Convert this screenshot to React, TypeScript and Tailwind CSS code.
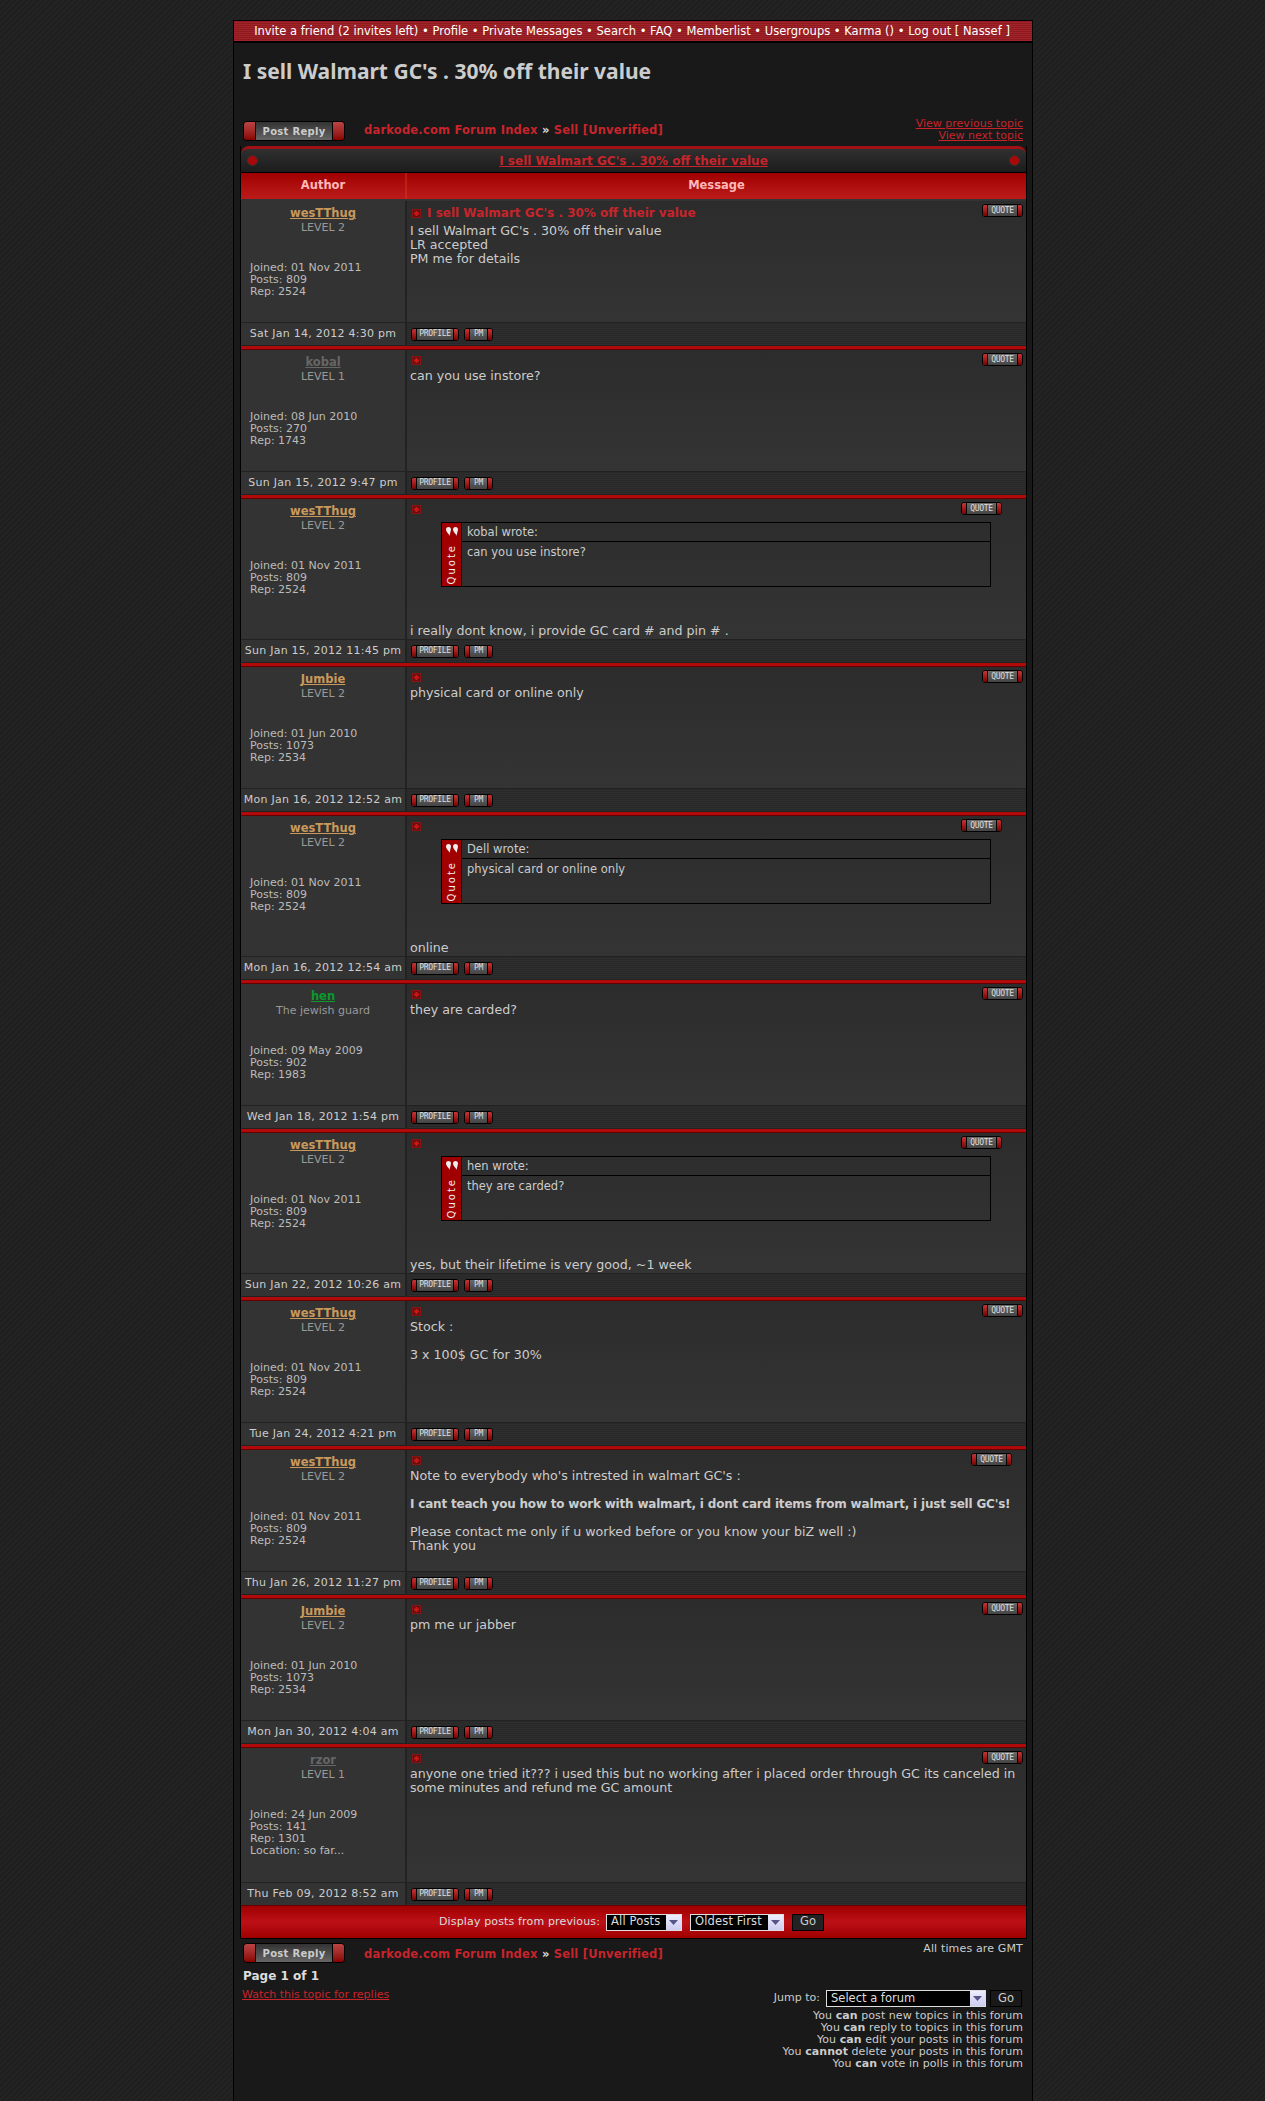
import React from "react";

const SANS = "font-['DejaVu_Sans','Liberation_Sans',sans-serif]";

function SmallBtn({ label, w }: { label: string; w: string }) {
  return (
    <span className={`flex h-[13px] ${w} rounded-[3px] border border-black bg-[#555] overflow-hidden`}>
      <span className="w-[4px] bg-gradient-to-b from-[#c33] to-[#700]" />
      <span className="flex-1 flex items-center justify-center bg-gradient-to-b from-[#6a6a6a] to-[#444] border-x border-black text-[8px] tracking-[-0.3px] leading-none text-[#ddd] font-['DejaVu_Sans_Mono',monospace]">
        {label}
      </span>
      <span className="w-[4px] bg-gradient-to-b from-[#c33] to-[#700]" />
    </span>
  );
}

function PostReply() {
  return (
    <span className="flex h-[20px] w-[102px] rounded-[4px] border border-black overflow-hidden">
      <span className="w-[11px] bg-gradient-to-b from-[#b44] to-[#800]" />
      <span className="flex-1 flex items-center justify-center bg-gradient-to-b from-[#333] to-[#666] border-x border-black text-[10px] font-bold tracking-[0.3px] text-[#ccc]">
        Post Reply
      </span>
      <span className="w-[11px] bg-gradient-to-b from-[#b44] to-[#800]" />
    </span>
  );
}

function Breadcrumb() {
  return (
    <span className="text-[11.5px] font-bold tracking-[0.2px] text-[#c8242b]">
      darkode.com Forum Index <span className="text-[#ddd]">»</span> Sell [Unverified]
    </span>
  );
}

function Fake({ w, children }: { w: string; children: React.ReactNode }) {
  return (
    <span className={`flex h-[17px] ${w} border border-[#ddd] bg-black text-[11.5px] text-[#ddd] items-center`}>
      <span className="flex-1 pl-[4px] whitespace-nowrap overflow-hidden">{children}</span>
      <span className="w-[15px] h-full flex items-center justify-center bg-gradient-to-b from-[#eef] to-[#cce]">
        <svg width="9" height="5" viewBox="0 0 9 5"><path d="M0 0h9L4.5 5z" fill="#55558a" /></svg>
      </span>
    </span>
  );
}

function Go({ bg }: { bg: string }) {
  return (
    <span className={`flex h-[17px] w-[32px] border border-black ${bg} text-[11.5px] text-[#ccc] items-center justify-center`}>Go</span>
  );
}

type PostT = {
  name: string; color: string; level: string; joined: string; posts: string; rep: string; extra?: string;
  date: string; h: string; qm?: string; subject?: string; quote?: [string, string]; body?: React.ReactNode; last?: boolean;
};

const wes = { name: "wesTThug", color: "text-[#c9995c]", level: "LEVEL 2", joined: "01 Nov 2011", posts: "809", rep: "2524" };
const jum = { name: "Jumbie", color: "text-[#c9995c]", level: "LEVEL 2", joined: "01 Jun 2010", posts: "1073", rep: "2534" };

const posts: PostT[] = [
  { ...wes, date: "Sat Jan 14, 2012 4:30 pm", h: "h-[121px]", subject: "I sell Walmart GC's . 30% off their value",
    body: <>I sell Walmart GC's . 30% off their value<br />LR accepted<br />PM me for details</> },
  { name: "kobal", color: "text-[#666]", level: "LEVEL 1", joined: "08 Jun 2010", posts: "270", rep: "1743", date: "Sun Jan 15, 2012 9:47 pm", h: "h-[121px]", body: "can you use instore?" },
  { ...wes, date: "Sun Jan 15, 2012 11:45 pm", h: "h-[140px]", qm: "mr-[21px]", quote: ["kobal wrote:", "can you use instore?"], body: "i really dont know, i provide GC card # and pin # ." },
  { ...jum, date: "Mon Jan 16, 2012 12:52 am", h: "h-[121px]", body: "physical card or online only" },
  { ...wes, date: "Mon Jan 16, 2012 12:54 am", h: "h-[140px]", qm: "mr-[21px]", quote: ["Dell wrote:", "physical card or online only"], body: "online" },
  { name: "hen", color: "text-[#0a9a2a]", level: "The jewish guard", joined: "09 May 2009", posts: "902", rep: "1983", date: "Wed Jan 18, 2012 1:54 pm", h: "h-[121px]", body: "they are carded?" },
  { ...wes, date: "Sun Jan 22, 2012 10:26 am", h: "h-[140px]", qm: "mr-[21px]", quote: ["hen wrote:", "they are carded?"], body: "yes, but their lifetime is very good, ~1 week" },
  { ...wes, date: "Tue Jan 24, 2012 4:21 pm", h: "h-[121px]", body: <>Stock :<br /><br />3 x 100$ GC for 30%</> },
  { ...wes, date: "Thu Jan 26, 2012 11:27 pm", h: "h-[121px]", qm: "mr-[11px]",
    body: <>Note to everybody who's intrested in walmart GC's :<br /><br /><b className="text-[12px] tracking-[-0.2px] whitespace-nowrap">I cant teach you how to work with walmart, i dont card items from walmart, i just sell GC's!</b><br /><br />Please contact me only if u worked before or you know your biZ well :)<br />Thank you</> },
  { ...jum, date: "Mon Jan 30, 2012 4:04 am", h: "h-[121px]", body: "pm me ur jabber" },
  { name: "rzor", color: "text-[#666]", level: "LEVEL 1", joined: "24 Jun 2009", posts: "141", rep: "1301", extra: "Location: so far...", date: "Thu Feb 09, 2012 8:52 am", h: "h-[134px]", last: true,
    body: "anyone one tried it??? i used this but no working after i placed order through GC its canceled in some minutes and refund me GC amount" },
];

function MiniIcon() {
  return (
    <svg width="9" height="9" viewBox="0 0 9 9" className="shrink-0">
      <rect x="0" y="0" width="9" height="9" fill="#631010" />
      <rect x="0.5" y="0.5" width="8" height="8" fill="none" stroke="#8a1414" />
      <path d="M3.500 2h2v1.500h1.500v2h-1.500v1.500h-2v-1.500h-1.500v-2h1.500z" fill="#c81818" />
    </svg>
  );
}

function Post({ p }: { p: PostT }) {
  return (
    <div>
      <div className="grid grid-cols-[166px_1fr] border-b border-[#222]">
        <div className={`${p.h} bg-[#333] border-r-2 border-[#222] pt-[6px] text-[11px] leading-[12px] text-[#bbb]`}>
          <div className={`text-center text-[11.5px] leading-[12px] font-bold underline ${p.color}`}>{p.name}</div>
          <div className="text-center mt-[3px] text-[#999]">{p.level}</div>
          <div className="pl-[9px] mt-[28px]">
            Joined: {p.joined}<br />Posts: {p.posts}<br />Rep: {p.rep}
            {p.extra && <><br />{p.extra}</>}
          </div>
        </div>
        <div className={`${p.h} bg-gradient-to-b from-[#2c2c2c] to-[#343434] pl-[3px] pr-[3px] pt-[3px] flex flex-col text-[12.65px] leading-[14px] text-[#ccc]`}>
          <div className="flex justify-between items-start h-[17px] shrink-0">
            <div className="pl-[2px] pt-[3px] flex items-center gap-[6px] leading-none">
              <MiniIcon />
              {p.subject && <span className="font-bold text-[12px] text-[#c8242b]">{p.subject}</span>}
            </div>
            <span className={p.qm}><SmallBtn label="QUOTE" w="w-[41px]" /></span>
          </div>
          {p.quote ? (
            <>
              <div className="ml-[31px] mr-[32px] mt-[3px] h-[65px] border border-black flex">
                <div className="w-[20px] bg-[#a00000] border-r border-black flex flex-col items-center justify-between pt-[4px] pb-[2px] text-[#eee]">
                  <svg width="12" height="9" viewBox="0 0 12 9" fill="#eee">
                    <path d="M0 2.500a2.500 2.500 0 0 1 5 0C5 3 4 7 3.500 9 3.300 7 0 5 0 2.500zM7 2.500a2.500 2.500 0 0 1 5 0C12 3 11 7 10.500 9 10.300 7 7 5 7 2.500z" />
                  </svg>
                  <span className="[writing-mode:vertical-rl] rotate-180 text-[10px] font-normal leading-none tracking-[2px]">Quote</span>
                </div>
                <div className="flex-1 flex flex-col text-[11.5px]">
                  <div className="h-[19px] border-b border-black pl-[5px] pt-[2px] text-[#ccc]">{p.quote[0]}</div>
                  <div className="pl-[5px] pt-[3px] text-[#ccc]">{p.quote[1]}</div>
                </div>
              </div>
              <div className="mt-auto pb-[1px]">{p.body}</div>
            </>
          ) : (
            <div className={p.subject ? "mt-[3px]" : "-mt-[1px]"}>{p.body}</div>
          )}
        </div>
      </div>
      <div className="grid grid-cols-[166px_1fr] h-[22px]">
        <div className="bg-[#333] border-r-2 border-[#222] flex items-center justify-center text-[11px] tracking-[0.25px] text-[#ccc] whitespace-nowrap">{p.date}</div>
        <div className="bg-[repeating-linear-gradient(0deg,#2e2e2e_0px,#2e2e2e_1px,#282828_1px,#282828_2px)] flex items-center pl-[4px] gap-[5px]">
          <SmallBtn label="PROFILE" w="w-[48px]" />
          <SmallBtn label="PM" w="w-[29px]" />
        </div>
      </div>
      {!p.last && <div className="h-[5px] bg-[#222] pt-[1px]"><div className="h-[4px] bg-[#b00a0a] border-b border-[#600]" /></div>}
    </div>
  );
}

export default function App() {
  const perms: [string, string, string][] = [
    ["You ", "can", " post new topics in this forum"],
    ["You ", "can", " reply to topics in this forum"],
    ["You ", "can", " edit your posts in this forum"],
    ["You ", "cannot", " delete your posts in this forum"],
    ["You ", "can", " vote in polls in this forum"],
  ];
  return (
    <div className={`${SANS} min-h-[2101px] bg-[repeating-linear-gradient(135deg,#232323_0px,#232323_2px,#1f1f1f_2px,#1f1f1f_4px)] pt-[20px]`}>
      <div className="ml-[233px] w-[800px] min-h-[2081px] border-x border-t border-black bg-[#191919]">
        <div className="h-[22px] pt-[1px] border-b-2 border-black bg-[repeating-linear-gradient(0deg,#a0242a_0px,#a0242a_1px,#8e1a20_1px,#8e1a20_2px)] flex items-center justify-center text-[11.5px] text-white whitespace-nowrap pr-[2px]">
          Invite a friend (2 invites left) • Profile • Private Messages • Search • FAQ • Memberlist • Usergroups • Karma () • Log out [ Nassef ]
        </div>
        <h1 className="ml-[9px] mt-[13px] h-[64px] text-[21px] leading-[30px] font-bold text-[#ccc] font-['Noto_Sans',sans-serif] whitespace-nowrap">
          I sell Walmart GC's . 30% off their value
        </h1>
        <div className="flex items-start h-[26px] ml-[9px] mr-[9px]">
          <div className="mt-[1px]"><PostReply /></div>
          <div className="ml-[19px] mt-[2px] leading-[14px]"><Breadcrumb /></div>
          <div className="ml-auto text-right text-[11px] leading-[12px] text-[#c8242b] underline -mt-[2px]">
            View previous topic<br />View next topic
          </div>
        </div>
        <div className="ml-[6px] w-[787px] border-x border-b border-black">
          <div className="h-[27px] rounded-t-[8px] border-b border-black bg-gradient-to-b from-[#303030] to-[#1c1c1c] flex items-center justify-between px-[6px] border-t-[3px] border-t-[#a01015]">
            <span className="w-[11px] h-[11px] rounded-full bg-[#a80808] border border-[#333]" />
            <span className="text-[12px] font-bold underline text-[#c8242b]">I sell Walmart GC's . 30% off their value</span>
            <span className="w-[11px] h-[11px] rounded-full bg-[#a80808] border border-[#333]" />
          </div>
          <div className="grid grid-cols-[166px_1fr] h-[28px] border-b-2 border-[#333] bg-gradient-to-b from-[#a00000] to-[#bb1a1a] text-[11.5px] font-bold text-[#ffb8b8]">
            <div className="flex items-center justify-center border-r-2 border-[#c42]/40">Author</div>
            <div className="flex items-center justify-center">Message</div>
          </div>
          {posts.map((p, i) => <Post key={i} p={p} />)}
          <div className="h-[33px] bg-gradient-to-b from-[#a00000] via-[#bb1016] to-[#a00000] border-t border-[#600] flex items-center justify-center gap-[8px] pr-[4px] text-[11px] tracking-[0.15px] text-[#ddd]">
            <span className="mr-[-2px]">Display posts from previous:</span>
            <Fake w="w-[76px]">All Posts</Fake>
            <Fake w="w-[94px]">Oldest First</Fake>
            <Go bg="bg-[#222]" />
          </div>
        </div>
        <div className="flex items-start ml-[9px] mr-[9px] mt-[4px] h-[22px]">
          <PostReply />
          <div className="ml-[19px] mt-[3px] leading-[14px]"><Breadcrumb /></div>
          <div className="ml-auto text-[11px] leading-[12px] tracking-[0.15px] text-[#ccc]">All times are GMT</div>
        </div>
        <div className="ml-[9px] mt-[4px] text-[12px] leading-[14px] font-bold text-[#ddd]">Page 1 of 1</div>
        <div className="flex items-start justify-between mt-[2px] ml-[8px] mr-[9px]">
          <div className="text-[11px] leading-[12px] mt-[4px] underline text-[#c8242b]">Watch this topic for replies</div>
          <div className="flex flex-col items-end">
            <div className="flex items-center gap-[4px] mt-[5px] mr-[1px] text-[11px] text-[#ccc]">
              <span className="mr-[2px]">Jump to:</span>
              <Fake w="w-[160px]">Select a forum</Fake>
              <Go bg="bg-[#191919]" />
            </div>
            <div className="mt-[3px] text-right text-[11px] leading-[12px] tracking-[0.07px] text-[#ccc]">
              {perms.map((l, i) => <div key={i}>{l[0]}<b>{l[1]}</b>{l[2]}</div>)}
            </div>
          </div>
        </div>
      </div>
    </div>
  );
}
